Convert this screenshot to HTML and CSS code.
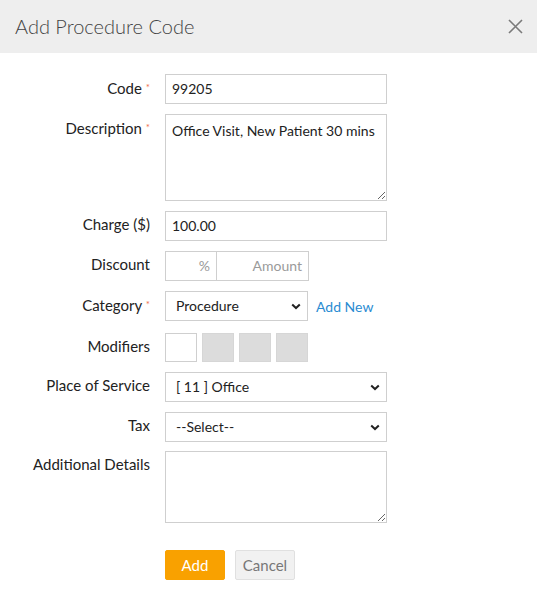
FILE: index.html
```html
<!DOCTYPE html>
<html>
<head>
<meta charset="utf-8">
<link rel="stylesheet" href="styles.css">
</head>
<body>
<div class="modal">
  <div class="modal-header">
    <h1 class="modal-title">Add Procedure Code</h1>
    <svg class="close" width="15" height="15" viewBox="0 0 15 15"><path d="M1 1 L14 14 M14 1 L1 14" stroke="#7a7a7a" stroke-width="1.6" fill="none"/></svg>
  </div>
  <div class="modal-body">
    <div class="row">
      <label class="lbl">Code <span class="req">*</span></label>
      <div class="field"><div class="input wide">99205</div></div>
    </div>
    <div class="row">
      <label class="lbl">Description <span class="req">*</span></label>
      <div class="field"><textarea class="textarea wide desc" readonly>Office Visit, New Patient 30 mins</textarea></div>
    </div>
    <div class="row">
      <label class="lbl">Charge ($)</label>
      <div class="field"><div class="input wide">100.00</div></div>
    </div>
    <div class="row">
      <label class="lbl">Discount</label>
      <div class="field discount">
        <div class="input pct placeholder">%</div>
        <div class="input amount placeholder">Amount</div>
      </div>
    </div>
    <div class="row">
      <label class="lbl">Category <span class="req">*</span></label>
      <div class="field inline">
        <div class="select category"><span>Procedure</span>
          <svg class="chev" width="10" height="7" viewBox="0 0 10 7"><path d="M1.2 1.4 L5 5 L8.8 1.4" stroke="#222" stroke-width="2" fill="none"/></svg>
        </div>
        <a class="link">Add New</a>
      </div>
    </div>
    <div class="row mods-row">
      <label class="lbl">Modifiers</label>
      <div class="field mods">
        <div class="mod"></div>
        <div class="mod disabled"></div>
        <div class="mod disabled"></div>
        <div class="mod disabled"></div>
      </div>
    </div>
    <div class="row">
      <label class="lbl">Place of Service</label>
      <div class="field">
        <div class="select wide"><span>[ 11 ] Office</span>
          <svg class="chev" width="10" height="7" viewBox="0 0 10 7"><path d="M1.2 1.4 L5 5 L8.8 1.4" stroke="#222" stroke-width="2" fill="none"/></svg>
        </div>
      </div>
    </div>
    <div class="row">
      <label class="lbl">Tax</label>
      <div class="field">
        <div class="select wide"><span>--Select--</span>
          <svg class="chev" width="10" height="7" viewBox="0 0 10 7"><path d="M1.2 1.4 L5 5 L8.8 1.4" stroke="#222" stroke-width="2" fill="none"/></svg>
        </div>
      </div>
    </div>
    <div class="row details-row">
      <label class="lbl">Additional Details</label>
      <div class="field"><textarea class="textarea wide details" readonly></textarea></div>
    </div>
    <div class="row actions">
      <div></div>
      <div class="field buttons">
        <button class="btn btn-add">Add</button>
        <button class="btn btn-cancel">Cancel</button>
      </div>
    </div>
  </div>
</div>
</body>
</html>
```

FILE: styles.css
```css
html, body {
  margin: 0;
  padding: 0;
  background: #fff;
}
body {
  font-family: Lato, "Open Sans", Arial, sans-serif;
  font-size: 14px;
  color: #333;
}
.modal-header {
  height: 53px;
  background: #eeeeee;
  display: flex;
  align-items: center;
  justify-content: space-between;
  padding: 0 14px 0 15px;
}
.modal-title {
  margin: 0;
  font-size: 20px;
  font-weight: 300;
  color: #444;
  line-height: 24px;
  padding-bottom: 2px;
}
.close {
  display: block;
  margin-top: -1px;
}
.modal-body {
  padding-top: 21px;
}
.row {
  display: grid;
  grid-template-columns: 150px 1fr;
  column-gap: 15px;
  margin-bottom: 10px;
}
.lbl {
  text-align: right;
  font-size: 15px;
  line-height: 20px;
  padding-top: 3px;
  color: #222;
}
.req {
  color: #f0704e;
  font-size: 10px;
  vertical-align: 3px;
}
.field {
  display: flex;
}
.wide {
  width: 222px;
}
.input {
  box-sizing: border-box;
  height: 30px;
  border: 1px solid #cfcfcf;
  padding: 4px 6px;
  line-height: 20px;
  color: #222;
  font-size: 14px;
}
.placeholder {
  color: #9a9a9a;
  text-align: right;
}
.pct {
  width: 52px;
}
.amount {
  width: 92px;
  border-left: none;
}
.textarea {
  box-sizing: border-box;
  display: block;
  border: 1px solid #cfcfcf;
  padding: 6px 6px;
  font-family: Lato, "Open Sans", Arial, sans-serif;
  font-size: 14px;
  line-height: 20px;
  color: #222;
  resize: both;
  margin: 0;
  outline: none;
}
.desc {
  height: 87px;
}
.details {
  height: 72px;
}
.details-row {
  margin-top: -1px;
}
.select {
  box-sizing: border-box;
  height: 30px;
  border: 1px solid #cfcfcf;
  padding: 4px 6px 4px 10px;
  line-height: 20px;
  color: #222;
  display: flex;
  align-items: center;
  justify-content: space-between;
}
.category {
  width: 143px;
}
.inline {
  align-items: center;
  gap: 8px;
}
.link {
  color: #2a8cd2;
  text-decoration: none;
}
.mods-row {
  margin-top: 12px;
}
.mods {
  gap: 5px;
}
.mod {
  box-sizing: border-box;
  width: 32px;
  height: 29px;
  border: 1px solid #cfcfcf;
  background: #fff;
}
.mod.disabled {
  background: #dcdcdc;
  border-color: #d6d6d6;
}
.actions {
  margin-top: 27px;
}
.buttons {
  gap: 10px;
}
.btn {
  box-sizing: border-box;
  width: 60px;
  height: 30px;
  border-radius: 2px;
  font-family: Lato, "Open Sans", Arial, sans-serif;
  font-size: 15px;
  padding: 0;
  cursor: pointer;
}
.btn-add {
  background: #f9a100;
  border: 1px solid #f9a100;
  color: #fff;
}
.btn-cancel {
  background: #f1f1f1;
  border: 1px solid #e0e0e0;
  color: #777;
}
```
